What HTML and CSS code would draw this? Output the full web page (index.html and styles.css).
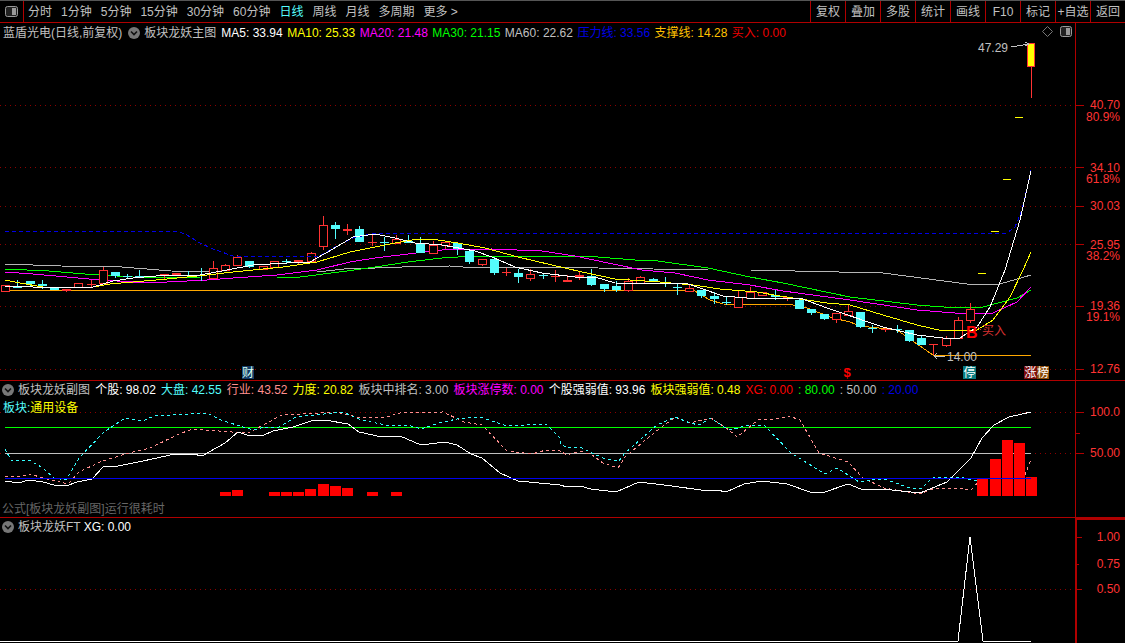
FILE: index.html
```html
<!DOCTYPE html>
<html lang="zh">
<head>
<meta charset="utf-8">
<title>蓝盾光电</title>
<link rel="stylesheet" href="styles.css">
</head>
<body>
<div class="app">
  <header class="toolbar">
    <div class="panel-btn"><svg class="ico-panel" width="13" height="11" viewBox="0 0 13 11"><rect x=".5" y=".5" width="12" height="10" rx="2" class="ico-box"/><rect x="7" y="2" width="4" height="7" class="ico-fill"/></svg></div>
    <nav class="periods">
      <span>分时</span><span>1分钟</span><span>5分钟</span><span>15分钟</span><span>30分钟</span><span>60分钟</span><span class="active">日线</span><span>周线</span><span>月线</span><span>多周期</span><span>更多 &gt;</span>
    </nav>
    <nav class="actions">
      <span>复权</span><span>叠加</span><span>多股</span><span>统计</span><span>画线</span><span>F10</span><span>标记</span><span>+自选</span><span>返回</span>
    </nav>
  </header>

  <section class="pane pane-main">
    <div class="legend legend-main">
      <span class="c-txt stock">蓝盾光电(日线,前复权)</span>
      <svg class="chev" width="12" height="12" viewBox="0 0 12 12"><circle cx="6" cy="6" r="6" class="chev-bg"/><path d="M3 4.5l3 3 3-3" class="chev-mark"/></svg>
      <span class="c-txt main-title">板块龙妖主图</span>
      <span class="c-w">MA5: 33.94</span><span class="c-y">MA10: 25.33</span><span class="c-m">MA20: 21.48</span><span class="c-g">MA30: 21.15</span><span class="c-txt">MA60: 22.62</span><span class="c-b">压力线: 33.56</span><span class="c-o">支撑线: 14.28</span><span class="c-r">买入: 0.00</span>
    </div>
    <svg class="chart" width="1125" height="357" viewBox="0 23 1125 357">
      <path class="dots" d="M0 105.5H1076M0 167.5H1076M0 206.5H1076M0 244.5H1076M0 306.5H1076M0 369.5H1076"/>
      <polyline class="l-gray" points="5,264 61,266 122,267 171,271 217,272 317,272 353,268 375,268 402,267 450,266 463,267 550,267 598,268 708,270 750,270 883,273 967,284 1000,284 1031,275"/>
      <polyline class="l-green" points="5,269 49,271 85,274 133,277 200,278 277,278 300,277 347,271 375,267 408,262 442,258 475,256 585,256 635,260 658,261 708,268 750,277 783,283 850,297 917,305 957,308 983,307 1017,298 1031,290"/>
      <polyline class="l-mag" points="5,272 33,274 67,277 100,280 133,282 167,282 207,280 233,278 277,275 317,270 350,262 375,258 408,254 442,250 492,249 542,251 575,256 608,263 642,270 675,273 708,280 750,285 783,291 850,300 917,310 967,314 993,313 1017,302 1031,287"/>
      <polyline class="l-orange" points="2,290 693,290 710,300 723,304 793,305 807,308 833,318 850,322 860,326 897,330 907,337 933,355 1031,355"/>
      <path class="wick-r" d="M103.5 267V270M213.5 261V268M225.5 264V265M237.5 255V257M311.5 252V253M323.5 216V250M396.5 235V239M433.5 241V254M445.5 245V249M482.5 264V266M530.5 269V281M579.5 272V280M628.5 278V292M640.5 276V277M689.5 285V288M738.5 291V297M750.5 287V292M836.5 319V323M848.5 304V311M946.5 336V347M958.5 317V320M970.5 303V323M66.5 290V292M164.5 276V279M298.5 262V264M347.5 224V235M567.5 275V280M787.5 298V301M91.5 280V287M372.5 233V246M506.5 268V276M555.5 270V282M885.5 327V332M933.5 344V355"/>
      <path class="hollow" d="M1.5 285.5h8v6h-8zM74.5 283.5h8v4h-8zM99.5 270.5h8v13h-8zM209.5 268.5h8v10h-8zM221.5 265.5h8v5h-8zM233.5 257.5h8v8h-8zM259.5 266.5h8v3h-8zM270.5 261.5h8v6h-8zM307.5 253.5h8v8h-8zM319.5 225.5h8v21h-8zM392.5 239.5h8v4h-8zM429.5 245.5h8v8h-8zM441.5 242.5h8v3h-8zM478.5 259.5h8v5h-8zM526.5 274.5h8v4h-8zM575.5 275.5h8v1h-8zM624.5 281.5h8v9h-8zM636.5 277.5h8v6h-8zM685.5 288.5h8v3h-8zM734.5 297.5h8v10h-8zM746.5 292.5h8v6h-8zM758.5 292.5h8v3h-8zM832.5 313.5h8v6h-8zM844.5 311.5h8v4h-8zM942.5 338.5h8v7h-8zM954.5 320.5h8v18h-8zM966.5 309.5h8v11h-8z"/>
      <path class="fill-r" d="M62 289h9v2h-9zM160 274h9v2h-9zM172 273h9v2h-9zM294 260h9v2h-9zM343 229h9v2h-9zM563 280h9v2h-9zM783 297h9v1h-9zM87 284h9v1h-9zM368 242h9v1h-9zM502 272h9v1h-9zM551 276h9v1h-9zM881 329h9v1h-9zM929 344h9v1h-9z"/>
      <path class="wick-c" d="M30.5 284V287M42.5 280V289M115.5 276V278M139.5 270V276M249.5 267V268M335.5 222V239M359.5 226V229M408.5 235V241M420.5 237V243M457.5 249V255M469.5 262V264M494.5 257V275M518.5 269V283M591.5 269V286M604.5 289V292M616.5 281V292M653.5 278V279M665.5 277V287M701.5 296V298M714.5 292V304M726.5 297V305M775.5 290V300M799.5 298V300M811.5 313V315M824.5 319V320M860.5 327V328M909.5 341V342M921.5 336V338M17.5 280V288M127.5 274V278M188.5 271V277M201.5 268V281M286.5 259V263M384.5 237V251M543.5 274V279M677.5 283V295M872.5 325V333M897.5 325V333"/>
      <path class="fill-c" d="M26 281h9v3h-9zM38 284h9v2h-9zM50 288h9v2h-9zM111 272h9v4h-9zM135 276h9v1h-9zM245 261h9v6h-9zM331 225h9v4h-9zM355 229h9v13h-9zM404 241h9v2h-9zM416 243h9v10h-9zM453 243h9v6h-9zM465 251h9v11h-9zM490 259h9v14h-9zM514 273h9v4h-9zM587 276h9v9h-9zM600 284h9v5h-9zM612 286h9v4h-9zM649 279h9v3h-9zM661 283h9v1h-9zM697 290h9v6h-9zM710 296h9v3h-9zM722 302h9v1h-9zM771 295h9v2h-9zM795 300h9v9h-9zM807 309h9v4h-9zM820 314h9v5h-9zM856 312h9v15h-9zM905 330h9v11h-9zM917 338h9v7h-9zM13 287h9v1h-9zM123 276h9v1h-9zM184 275h9v1h-9zM197 275h9v1h-9zM282 261h9v1h-9zM380 242h9v1h-9zM539 275h9v1h-9zM673 287h9v1h-9zM868 328h9v1h-9zM893 329h9v1h-9z"/>
      <polyline class="l-blue" points="5,231 177,231 187,235 200,243 213,249 233,256 320,256 333,248 353,238 375,233 1007,233 1015,227 1022,210 1031,170"/>
      <polyline class="l-yellow" points="5,280 20,283 43,287 67,287 93,287 110,284 133,282 167,279 207,275 233,272 283,267 317,262 350,252 375,247 395,243 418,239 438,240 458,243 485,248 518,257 552,265 582,272 615,279 660,282 693,285 720,289 757,292 780,296 827,303 850,305 883,315 917,325 943,331 977,330 993,320 1010,297 1023,270 1031,252"/>
      <polyline class="l-white" points="5,286 33,287 67,288 93,287 113,281 133,278 167,275 200,275 227,270 253,265 287,263 310,262 333,249 353,237 375,234 395,238 415,243 442,245 475,251 492,257 515,267 542,273 575,277 595,277 615,283 658,284 685,283 700,288 723,296 747,298 800,298 827,308 883,327 917,335 943,338 960,338 977,327 990,307 1005,270 1020,220 1031,171"/>
      <path class="dash-y" d="M978 273h8M991 231h8M1003 179h8M1015 117h8"/>
      <path class="wick-r" d="M1031.5 66V98"/>
      <rect class="limit" x="1027.5" y="43.5" width="7" height="23"/>
      <path class="arrow" d="M1011 47L1029 44M1025 42L1029 44L1025 46M934 356H945M934 356L937 353M934 356L937 359"/>
      <path class="buy-mark" d="M977 326L981 330"/>
      <path class="axis" d="M1075.5 23V380M1076 105.5H1084M1076 167.5H1084M1076 206.5H1084M1076 244.5H1084M1076 306.5H1084M1076 369.5H1084"/>
      <g class="ax-lbl">
        <text x="1120" y="109">40.70</text><text x="1120" y="121">80.9%</text>
        <text x="1120" y="172">34.10</text><text x="1120" y="183">61.8%</text>
        <text x="1120" y="210">30.03</text>
        <text x="1120" y="249">25.95</text><text x="1120" y="260">38.2%</text>
        <text x="1120" y="310">19.36</text><text x="1120" y="321">19.1%</text>
        <text x="1120" y="373">12.76</text>
      </g>
      <text class="note" x="978" y="52">47.29</text>
      <text class="note" x="947" y="361">14.00</text>
      <text class="buy-b" x="966" y="338">B</text>
      <text class="buy" x="982" y="335">买入</text>
    </svg>
    <svg class="panel-tools" width="31" height="11" viewBox="0 0 31 11"><path d="M5.5 .5l5 5-5 5-5-5z" class="ico-line"/><rect x="18.5" y=".5" width="11" height="10" rx="2" class="ico-box"/><rect x="24" y="2" width="4" height="7" class="ico-fill"/></svg>
    <span class="badge b-cai">财</span>
    <span class="badge b-s">$</span>
    <span class="badge b-ting">停</span>
    <span class="badge b-zhang">涨</span>
    <span class="badge b-bang">榜</span>
  </section>

  <section class="pane pane-sub">
    <div class="legend legend-sub">
      <svg class="chev" width="12" height="12" viewBox="0 0 12 12"><circle cx="6" cy="6" r="6" class="chev-bg"/><path d="M3 4.5l3 3 3-3" class="chev-mark"/></svg>
      <span class="c-txt">板块龙妖副图</span>
      <span class="c-w">个股: 98.02</span><span class="c-c">大盘: 42.55</span><span class="c-p">行业: 43.52</span><span class="c-y">力度: 20.82</span><span class="c-txt">板块中排名: 3.00</span><span class="c-m">板块涨停数: 0.00</span><span class="c-w">个股强弱值: 93.96</span><span class="c-y">板块强弱值: 0.48</span><span class="c-r2">XG: 0.00</span><span class="c-g">: 80.00</span><span class="c-txt">: 50.00</span><span class="c-b">: 20.00</span>
    </div>
    <div class="sector"><span class="c-c">板块:</span><span class="c-y">通用设备</span></div>
    <svg class="chart" width="1125" height="136" viewBox="0 381 1125 136">
      <path class="dots" d="M0 412.5H1076M0 453.5H1076"/>
      <path class="l-green" d="M5 427.5H1031"/>
      <path class="l-gray2" d="M5 453.5H1031"/>
      <polyline class="d-pink" points="5,476 18,477 30,474 43,478 68,484 79,472 100,462 125,454 150,448 179,434 193,429 232,432 250,432 282,415 336,412 357,417 386,417 400,413 443,412 464,422 482,425 507,451 532,454 546,450 560,451 567,455 580,451 592,455 603,463 618,468 625,457 654,433 675,417 690,423 711,418 729,430 737,437 758,420 776,419 789,416 800,420 819,453 848,462 863,478 884,488 920,494 935,488 960,488 971,490 982,478"/>
      <polyline class="d-cyan" points="5,449 11,460 29,460 43,468 54,478 66,480 79,458 104,432 125,418 143,421 154,416 207,413 221,420 246,428 254,430 264,427 279,427 296,417 343,412 361,420 386,425 411,426 421,429 439,423 457,419 480,417 507,426 546,424 560,438 560,443 567,448 580,447 592,453 603,458 619,461 625,453 657,425 675,417 690,423 699,425 711,418 724,427 731,430 744,426 764,425 791,453 825,474 837,468 859,482 870,480 884,479 910,488 922,488 933,477 960,477 971,480 982,480"/>
      <polyline class="l-white" points="5,481 18,483 29,480 43,482 54,485 66,486 77,482 92,479 104,466 118,466 143,461 175,454 193,454 202,456 225,443 238,432 250,436 264,435 273,431 293,427 314,420 325,420 348,424 359,432 382,437 400,436 421,445 445,442 457,445 471,454 482,458 500,473 518,481 539,483 560,485 567,487 580,486 591,489 616,492 639,482 672,486 701,490 717,490 726,492 744,484 762,481 787,484 810,492 825,492 848,484 861,489 892,490 920,493 947,482 971,458 982,438 994,425 1009,417 1031,412"/>
      <path class="bars" d="M220 492h11v4h-11zM232 490h11v6h-11zM269 492h11v4h-11zM281 492h11v4h-11zM293 492h11v4h-11zM305 489h11v7h-11zM318 484h11v12h-11zM330 486h11v10h-11zM342 488h11v8h-11zM367 492h11v4h-11zM391 492h11v4h-11zM977 479h11v17h-11zM990 459h11v37h-11zM1002 440h11v56h-11zM1014 443h11v53h-11zM1026 477h11v19h-11z"/>
      <path class="l-blue2" d="M5 478.5H1031"/>
      <polyline class="d-pink" points="1025,475 1031,459"/>
      <path class="axis" d="M1075.5 381V517M1076 412.5H1084M1076 433.5H1080M1076 453.5H1084"/>
      <g class="ax-lbl"><text x="1120" y="416">100.0</text><text x="1120" y="457">50.00</text></g>
    </svg>
    <div class="slow">公式[板块龙妖副图]运行很耗时</div>
  </section>

  <section class="pane pane-ft">
    <div class="legend legend-ft">
      <svg class="chev" width="12" height="12" viewBox="0 0 12 12"><circle cx="6" cy="6" r="6" class="chev-bg"/><path d="M3 4.5l3 3 3-3" class="chev-mark"/></svg>
      <span class="c-txt">板块龙妖FT</span><span class="c-w ft-val">XG: 0.00</span>
    </div>
    <svg class="chart" width="1125" height="125" viewBox="0 518 1125 125">
      <path class="dots" d="M0 589.5H1076"/>
      <polyline class="l-white" points="0,641 958,641 970,537 983,641 1031,641"/>
      <path class="axis-thick" d="M1076 518V643M1076 519H1125"/>
      <path class="axis" d="M1076 537.5H1082M1076 564.5H1079M1076 589.5H1082"/>
      <g class="ax-lbl"><text x="1120" y="541">1.00</text><text x="1120" y="568">0.75</text><text x="1120" y="593">0.50</text></g>
    </svg>
  </section>
</div>
</body>
</html>
```
FILE: styles.css
```css
* { box-sizing: border-box; }
html, body { margin: 0; padding: 0; background: #000; }
body { font: 12px/1 "Liberation Sans", "Noto Sans CJK SC", sans-serif; color: #c0c0c0; overflow: hidden; }
.app { width: 1125px; height: 643px; display: flex; flex-direction: column; background: #000; }

.toolbar { height: 23px; flex: none; display: flex; border-top: 1px solid #555; border-bottom: 1px solid #b00000; }
.panel-btn { width: 24px; display: flex; align-items: center; justify-content: center; border-right: 1px solid #b00000; }
.periods { display: flex; align-items: center; gap: 9px; padding-left: 4px; flex: 1; color: #c0c0c0; white-space: nowrap; }
.periods .active { color: #54fcfc; }
.actions { display: flex; }
.actions span { width: 35px; display: flex; align-items: center; justify-content: center; border-left: 1px solid #b00000; white-space: nowrap; }

.ico-box { fill: #222; stroke: #999; }
.ico-fill { fill: #999; }
.ico-line { fill: none; stroke: #777; }

.pane { position: relative; flex: none; border-bottom: 1px solid #b00000; }
.pane-main { height: 358px; }
.pane-sub { height: 137px; }
.pane-ft { height: 125px; border-bottom: 0; }
.chart { display: block; }
.legend { position: absolute; left: 0; top: 0; height: 18px; display: flex; align-items: center; white-space: nowrap; z-index: 1; }
.legend-main { left: 3px; top: 1px; gap: 4.5px; }
.legend-sub { left: 2px; top: 0; gap: 5.1px; }
.legend-ft { left: 2px; top: 0; gap: 5px; }
.ft-val { margin-left: -2px; }
.legend .chev { flex: none; margin-right: -1px; }
.legend-main .chev { margin-right: -.5px; }
.stock { margin-right: 1.5px; }
.main-title { margin-right: .5px; }
.chev-bg { fill: #777; }
.chev-mark { fill: none; stroke: #111; stroke-width: 1.6; }
.sector { position: absolute; left: 3px; top: 21px; display: flex; z-index: 1; }
.slow { position: absolute; left: 2px; top: 122px; color: #666; }
.panel-tools { position: absolute; left: 1042px; top: 3px; }

.c-txt { color: #c0c0c0; }
.c-w { color: #fff; }
.c-y { color: #ff0; }
.c-m { color: #f0f; }
.c-g { color: #0f0; }
.c-b { color: #0000e6; }
.c-o { color: #ffc000; }
.c-r { color: #e00; }
.c-r2 { color: #f00; }
.c-c { color: #54fcfc; }
.c-p { color: #ff8f8f; }

.chart polyline, .chart path { fill: none; shape-rendering: crispEdges; }
.dots { stroke: #8c0000; stroke-dasharray: 1 4; }
.l-gray { stroke: #b5b5b5; }
.l-gray2 { stroke: #c0c0c0; }
.l-green { stroke: #0f0; }
.l-mag { stroke: #f0f; }
.l-orange { stroke: #ffa800; }
.l-yellow { stroke: #ff0; }
.l-white { stroke: #fff; }
.l-blue { stroke: #0000e6; stroke-dasharray: 4 3; }
.l-blue2 { stroke: #0000f0; }
.d-pink { stroke: #ff8f8f; stroke-dasharray: 3 3; }
.d-cyan { stroke: #3ff; stroke-dasharray: 3 3; }
.wick-r { stroke: #f33; }
.wick-c { stroke: #54fcfc; }
.chart .hollow { fill: #000; stroke: #f33; }
.chart .fill-r { fill: #f33; }
.chart .fill-c { fill: #54fcfc; }
.chart .bars { fill: #f00; }
.dash-y { stroke: #ff0; }
.limit { fill: #ff0; stroke: #f33; shape-rendering: crispEdges; }
.arrow { stroke: #c0c0c0; }
.buy-mark { stroke: #d83030; }
.axis { stroke: #b00000; }
.axis-thick { stroke: #b00000; stroke-width: 2; }
.ax-lbl { fill: #f33; font-size: 12px; text-anchor: end; }
.note { fill: #c0c0c0; font-size: 12px; }
.buy { fill: #d83030; font-size: 12px; }
.buy-b { fill: #f00; font-size: 16px; font-weight: 700; }

.badge { position: absolute; top: 343px; height: 13px; width: 12px; display: flex; align-items: center; justify-content: center; font-size: 12px; color: #fff; }
.b-cai { left: 242px; background: #123a66; color: #dfe; }
.b-s { left: 841px; color: #f00; font-weight: 700; font-size: 13px; }
.b-ting { left: 963px; width: 13px; background: #087a80; }
.b-zhang { left: 1024px; width: 13px; background: #7a0c0c; }
.b-bang { left: 1037px; background: #8a4a08; }
```
